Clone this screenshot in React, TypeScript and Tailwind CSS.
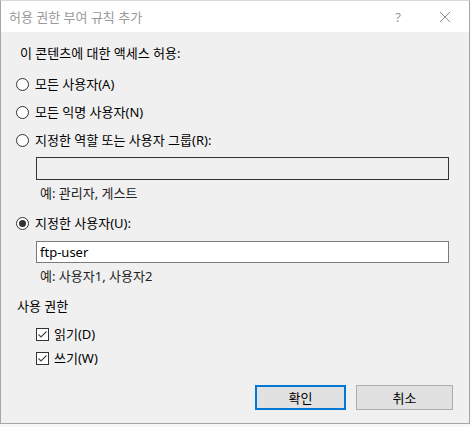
import React from 'react';

const Radio: React.FC<{ checked?: boolean; label: string }> = ({ checked, label }) => (
  <div className="flex items-center h-4">
    <div className="w-[13px] h-[13px] rounded-full border border-[#333] bg-white flex items-center justify-center ml-[15px]">
      {checked && <div className="w-[7px] h-[7px] rounded-full bg-[#333]" />}
    </div>
    <span className="ml-[6px]">{label}</span>
  </div>
);

const Check: React.FC<{ label: string }> = ({ label }) => (
  <div className="flex items-center h-4">
    <div className="w-[13px] h-[13px] border border-[#333] bg-white flex items-center justify-center ml-[35px]">
      <svg width="11" height="11" viewBox="0 0 11 11">
        <path d="M1.5 5.5 L4 8 L9.5 2.5" fill="none" stroke="#444" strokeWidth="1.1" />
      </svg>
    </div>
    <span className="ml-[5px]">{label}</span>
  </div>
);

export default function App() {
  return (
    <div className="w-[471px] h-[427px] bg-[#f8f8f8] font-['Noto_Sans','Noto_Sans_CJK_KR',sans-serif] text-[13px] leading-4 text-black">
      <div className="w-[470px] h-[424px] border border-t-[#d9d9d9] border-[#a6a6a6] bg-[#f0f0f0] flex flex-col">
        {/* title bar */}
        <div className="h-[31px] bg-white flex items-center">
          <span className="ml-[8px] text-[#999] text-[13px]">허용 권한 부여 규칙 추가</span>
          <span className="ml-auto text-[#999] text-[13px] mr-[38px]">?</span>
          <svg width="12" height="12" viewBox="0 0 12 12" className="mr-[18px]">
            <path d="M1 1 L11 11 M11 1 L1 11" stroke="#888" strokeWidth="1" />
          </svg>
        </div>

        <div className="mt-[13px] ml-[19px] h-4 flex items-center">이 콘텐츠에 대한 액세스 허용:</div>

        <div className="mt-[15px]"><Radio label="모든 사용자(A)" /></div>
        <div className="mt-[12px]"><Radio label="모든 익명 사용자(N)" /></div>
        <div className="mt-[12px]"><Radio label="지정한 역할 또는 사용자 그룹(R):" /></div>

        <div className="mt-[9px] ml-[35px] w-[413px] h-[23px] border border-[#333] bg-[#f0f0f0]" />
        <div className="mt-[5px] ml-[39px] h-4 flex items-center text-[#222]">예: 관리자, 게스트</div>

        <div className="mt-[14px]"><Radio checked label="지정한 사용자(U):" /></div>

        <div className="mt-[10px] ml-[35px] w-[413px] h-[22px] border border-[#7a7a7a] bg-white flex items-center pl-[3px]">ftp-user</div>
        <div className="mt-[5px] ml-[39px] h-4 flex items-center text-[#222]">예: 사용자1, 사용자2</div>

        <div className="mt-[14px] ml-[16px] h-4 flex items-center">사용 권한</div>
        <div className="mt-[12px]"><Check label="읽기(D)" /></div>
        <div className="mt-[8px]"><Check label="쓰기(W)" /></div>

        <div className="mt-[19px] flex">
          <button className="ml-[254px] w-[91px] h-[25px] border-2 border-[#0078d7] bg-[#e1e1e1] text-[13px]">확인</button>
          <button className="ml-[10px] w-[97px] h-[25px] border border-[#adadad] bg-[#e1e1e1] text-[13px]">취소</button>
        </div>
      </div>
    </div>
  );
}
